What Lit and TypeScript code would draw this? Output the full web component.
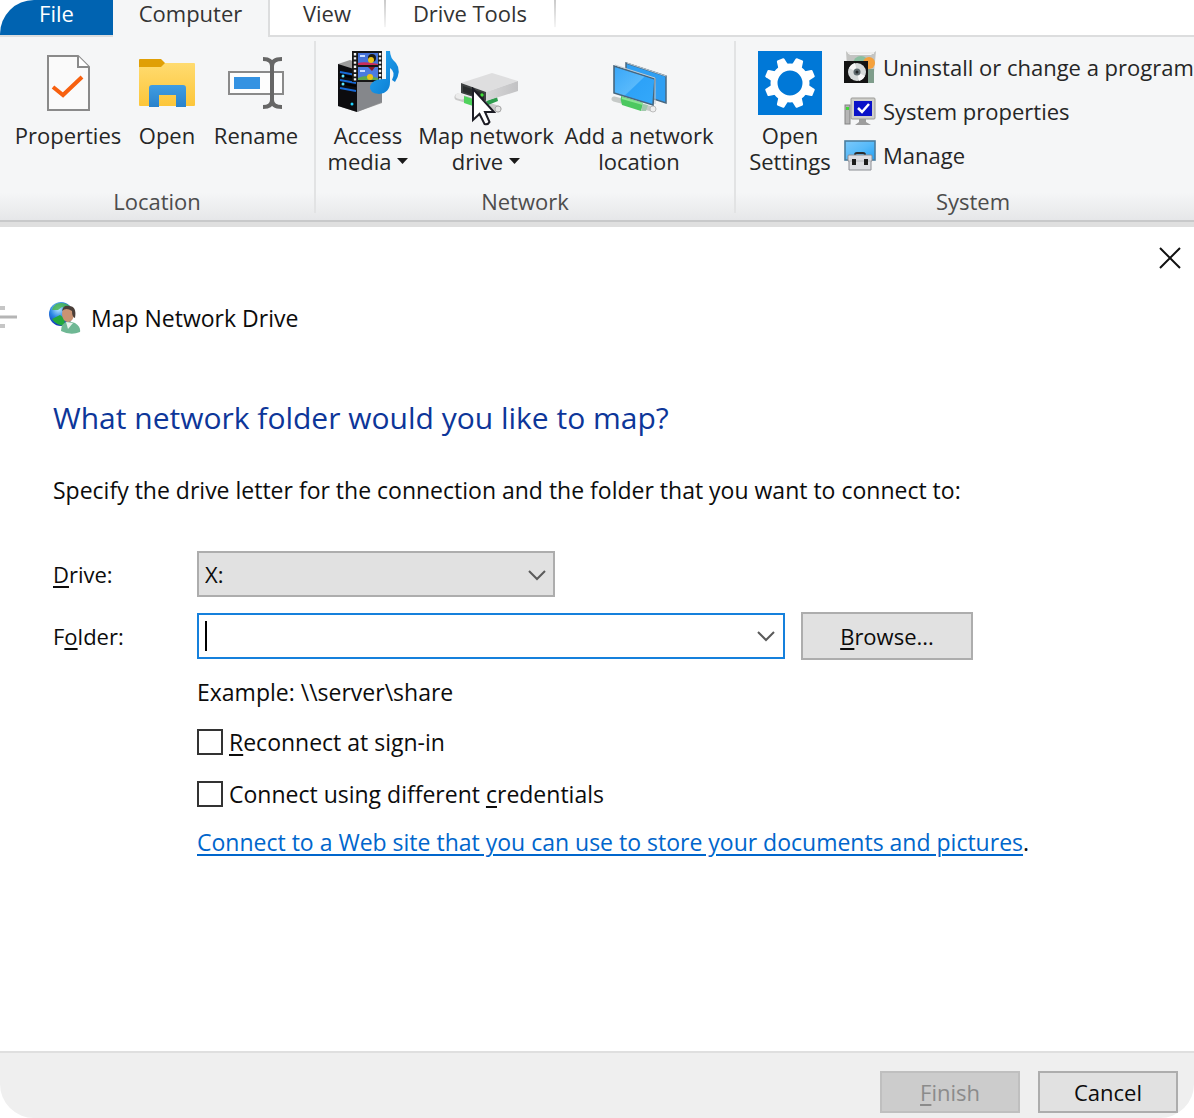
import { LitElement, html, css, svg } from "lit";
import { customElement, property, state } from "lit/decorators.js";

const propertiesIcon = svg`
  <path d="M12 5H42L53 16V59H12Z" fill="#fafafa" stroke="#8a8a8a" stroke-width="2"/>
  <path d="M42 5V16H53" fill="#fff" stroke="#8a8a8a" stroke-width="2"/>
  <path d="M17 36L27 44L46 26" fill="none" stroke="#f7600f" stroke-width="4"/>`;

const openIcon = svg`
  <defs><linearGradient id="fold" x1="0" y1="0" x2="0" y2="1">
    <stop offset="0" stop-color="#ffdb70"/><stop offset="1" stop-color="#fcc63a"/></linearGradient>
    <linearGradient id="clip" x1="0" y1="0" x2="0" y2="1">
    <stop offset="0" stop-color="#3f9de2"/><stop offset="1" stop-color="#2a82cb"/></linearGradient></defs>
  <path d="M5 12H59Q60 12 60 13V54Q60 55 59 55H5Q4 55 4 54V13Z" fill="url(#fold)"/>
  <path d="M4 9Q4 8 5 8H26L30 12L26 16H4Z" fill="#e09f06"/>
  <path d="M14 56V37Q14 34 17 34H48Q51 34 51 37V56H41V44H24V56Z" fill="url(#clip)"/>`;

const renameIcon = svg`
  <rect x="5" y="21" width="54" height="22" fill="#fdfdfd" stroke="#8a8a8a" stroke-width="2"/>
  <rect x="10" y="26" width="26" height="12" fill="#3492e2"/>
  <path d="M39 8Q48 8 48 15Q48 8 58 8M48 13V51M39 56Q48 56 48 49Q48 56 58 56" fill="none" stroke="#666" stroke-width="4"/>`;

const mediaIcon = svg`
  <defs><linearGradient id="note" x1="0" y1="0" x2="1" y2="1">
    <stop offset="0" stop-color="#26aaf5"/><stop offset="1" stop-color="#0878cf"/></linearGradient></defs>
  <path d="M2 13L14 9L46 20V52L21 61L2 55Z" fill="#9b9b9b"/>
  <path d="M21 22L46 22V51L21 61Z" fill="#85878b"/>
  <path d="M2 13L21 19V61L2 55Z" fill="#0c0c0f"/>
  <path d="M4 21L20 24M4 29L20 32M4 37L20 40" stroke="#1769d6" stroke-width="2"/>
  <path d="M4 24L20 27M4 32L20 35" stroke="#000" stroke-width="2"/>
  <circle cx="7" cy="25" r="1.5" fill="#5ce6ff"/><circle cx="7" cy="33" r="1.5" fill="#5ce6ff"/><circle cx="16" cy="53" r="1.5" fill="#1fd3ff"/>
  <rect x="16" y="0" width="30" height="31" fill="#171717"/>
  <path d="M19 2V30M44 2V30" stroke="#f4f4f4" stroke-width="2.4" stroke-dasharray="2.4 1.8"/>
  <rect x="22" y="2" width="20" height="12" fill="#4572d8"/>
  <rect x="22" y="16" width="20" height="13" fill="#4a7be0"/>
  <path d="M22 12Q28 10 42 13V14H22Z" fill="#c92d5b"/>
  <path d="M22 27Q30 23 42 27V29H22Z" fill="#5ea84f"/>
  <path d="M24 5H29M24 20H29" stroke="#c8dcff" stroke-width="2"/>
  <circle cx="36" cy="7" r="4" fill="#1c1c16"/><circle cx="35" cy="9" r="3" fill="#ebc318"/>
  <path d="M32 16L39 16L36 20Z" fill="#8c1727"/><circle cx="34" cy="26" r="3" fill="#ebc318"/>
  <path d="M50 0H54Q54 7 60 12Q66 20 59 31L56 29Q60 21 54 17V31Q54 42 43 43Q33 42 34 35Q37 27 50 28Z" fill="url(#note)"/>`;

const driveIcon = svg`
  <defs><linearGradient id="drv" x1="0" y1="0" x2="1" y2="0">
    <stop offset="0" stop-color="#d7d7d8"/><stop offset="1" stop-color="#c2c2c4"/></linearGradient></defs>
  <path d="M4 46L44 58" stroke="#c9c9c9" stroke-width="7" stroke-linecap="round"/>
  <path d="M4 45L8 46" stroke="#ececec" stroke-width="5" stroke-linecap="round"/>
  <path d="M10 45L19 48V55L10 52Z" fill="#4fd25c"/>
  <path d="M32 50L43 46L44 50L34 54Z" fill="#2e9d4e"/>
  <circle cx="44" cy="58" r="3" fill="#e4e4e4" stroke="#aaa"/>
  <path d="M7 32L38 22L64 30L32 41Z" fill="#dededf"/>
  <path d="M32 41L64 30V40L32 50Z" fill="url(#drv)"/>
  <path d="M7 32L32 41V50L7 42Z" fill="#3f4243"/>
  <path d="M9 35L30 42V48L9 41Z" fill="#292c2d"/>
  <circle cx="28" cy="44" r="1.7" fill="#41e236"/>`;

const locationIcon = svg`
  <defs><linearGradient id="scr" x1="0" y1="0" x2="1" y2="1">
    <stop offset="0" stop-color="#38a6f8"/><stop offset=".5" stop-color="#58b9fb"/><stop offset=".52" stop-color="#2da2f8"/><stop offset="1" stop-color="#35a9fa"/></linearGradient></defs>
  <path d="M19 12L59 25V52L19 39Z" fill="#2f9ff3" stroke="#4a6880" stroke-width="1.5"/>
  <path d="M20 12L59 25" stroke="#b8c4cc" stroke-width="1"/>
  <path d="M7 48L45 58" stroke="#c6cac8" stroke-width="5" stroke-linecap="round"/>
  <path d="M14 45L36 52L34 60L15 54Q13 49 14 45Z" fill="#4cc860"/>
  <path d="M15 47L36 53" stroke="#8be394" stroke-width="2"/>
  <path d="M36 53L41 54L39 60L34 60Z" fill="#a3c9ae"/>
  <circle cx="46" cy="58" r="3" fill="#eee" stroke="#bcbcbc"/>
  <path d="M7 15L48 28L46 54L7 42Z" fill="url(#scr)" stroke="#48667d" stroke-width="1.6"/>
  <path d="M8 14L48 27V53" fill="none" stroke="#c1cad0" stroke-width="1"/>`;

const settingsIcon = svg`
  <rect width="64" height="64" fill="#0078d7"/>
  ${[22.5, 67.5, 112.5, 157.5, 202.5, 247.5, 292.5, 337.5].map(
    (a) => svg`<path d="M26.500 16L28 7.500Q28.200 6.500 29 6.500H35Q35.800 6.500 36 7.500L37.500 16Z" fill="#fff" transform="rotate(${a} 32 32)"/>`
  )}
  <circle cx="32" cy="32" r="16" fill="none" stroke="#fff" stroke-width="7"/>`;

const uninstallIcon = svg`
  <path d="M2 0L6 4H27L32 0L29 32H4Z" fill="#c3c4c2"/>
  <path d="M4 2H30" stroke="#ededec" stroke-width="2"/>
  <circle cx="17" cy="13" r="8" fill="#8bbfa0"/>
  <circle cx="25" cy="12" r="6" fill="#f5a13c"/>
  <path d="M22 18H30V32H22Z" fill="#7f9d8b"/>
  <rect x="0" y="10" width="24" height="22" fill="#131313"/>
  <circle cx="13" cy="21" r="9" fill="#d6dada"/>
  <path d="M13 21L5 17Q7 13 11 12ZM13 21L21 25Q19 29 15 30Z" fill="#f7f7f7"/>
  <circle cx="13" cy="21" r="3.500" fill="#5e6a6e"/><circle cx="13" cy="21" r="1.500" fill="#202426"/>`;

const systemIcon = svg`
  <rect x="1" y="10" width="5" height="19" fill="#b5b5b5" stroke="#838383"/>
  <rect x="2" y="12" width="3" height="3" fill="#43d63a"/>
  <path d="M15 24H22V27L27 30H11L15 27Z" fill="#9d9d9d"/>
  <rect x="7" y="3" width="24" height="21" rx="1" fill="#cfcfca" stroke="#9b9b97"/>
  <rect x="10" y="6" width="18" height="15" fill="#0a12c8"/>
  <path d="M14 13L18 17L25 9" fill="none" stroke="#fff" stroke-width="2.500"/>`;

const manageIcon = svg`
  <defs><linearGradient id="mng" x1="0" y1="0" x2="1" y2="1">
    <stop offset="0" stop-color="#7cc9fb"/><stop offset=".5" stop-color="#57baf9"/><stop offset="1" stop-color="#22a0f4"/></linearGradient></defs>
  <rect x="1" y="2" width="30" height="19" fill="url(#mng)" stroke="#4a7d9f" stroke-width="1.600"/>
  <path d="M11 16Q11 14 13 14H19Q21 14 21 16" fill="none" stroke="#2b2b2b" stroke-width="2"/>
  <path d="M4 17Q4 16 5 16H27Q28 16 28 17V22H27V31H5V22H4Z" fill="#dcdde2" stroke="#8c8e94"/>
  <path d="M5 22H27" stroke="#b4b6bc"/>
  <rect x="8" y="20" width="4" height="6" fill="#1b1b1b"/><rect x="20" y="20" width="4" height="6" fill="#1b1b1b"/>`;

const wizardIcon = svg`
  <defs><radialGradient id="globe" cx=".4" cy=".3" r=".7">
    <stop offset="0" stop-color="#b5e6ff"/><stop offset=".5" stop-color="#2b86e4"/><stop offset="1" stop-color="#0d2fb4"/></radialGradient></defs>
  <circle cx="12" cy="12" r="12" fill="url(#globe)"/>
  <path d="M7 2Q15 -1 21 4L18 7L13 5L9 8L3 8Q4 4 7 2Z" fill="#49b648" opacity=".8"/>
  <path d="M5 16L11 13L16 17L15 24Q7 23 3 17Z" fill="#23a83c"/>
  <path d="M12 29Q12 21 19 19L26 21Q32 25 31 30Q22 34 12 29Z" fill="#6fb894"/>
  <path d="M17 20L19 27L24 21Z" fill="#e9f2ec"/>
  <ellipse cx="19" cy="12" rx="6" ry="8" fill="#c99372"/>
  <path d="M13 9Q14 3 20 4Q28 4 26 16Q23 15 23 9Q17 5 13 9Z" fill="#4a3e38"/>`;

const chevron = html`<svg class="chevron" viewBox="0 0 18 12" width="18" height="12" aria-hidden="true">
  <path d="M1 2L9 10L17 2" fill="none" stroke="#5a5a5a" stroke-width="2"/></svg>`;

@customElement("ribbon-button")
class RibbonButton extends LitElement {
  @property({ attribute: false }) icon: unknown;
  @property() label = "";
  @property() second = "";
  @property({ type: Boolean }) menu = false;

  static styles = css`
    :host { display: block; flex: none; }
    button {
      display: flex; flex-direction: column; align-items: center;
      width: 100%; padding: 0; border: 0; background: none;
      font: inherit; line-height: 26px; color: #262626; white-space: nowrap;
    }
    svg.art { display: block; width: 64px; height: 64px; margin-bottom: 7px; overflow: visible; }
    .line { display: flex; align-items: center; gap: 6px; }
  `;

  render() {
    return html`<button type="button">
      <svg class="art" viewBox="0 0 64 64" aria-hidden="true">${this.icon}</svg>
      <span class="line">${this.label}</span>
      ${this.second
        ? html`<span class="line">${this.second}${this.menu
            ? html`<svg width="11" height="6" viewBox="0 0 11 6" aria-hidden="true"><path d="M0 0H11L5.500 6Z" fill="#1a1a1a"/></svg>`
            : ""}</span>`
        : ""}
    </button>`;
  }
}

@customElement("app-root")
class AppRoot extends LitElement {
  @state() private folder = "";

  static styles = css`
    :host { display: block; background: #fff; font-family: "Open Sans", "Noto Sans", sans-serif; font-size: 22px; color: #0c0c0c; }
    * { box-sizing: border-box; }
    button, input, select { font: inherit; color: inherit; border-radius: 0; }
    svg { display: block; flex: none; }
    .screen { display: flex; flex-direction: column; min-height: 100vh; overflow: hidden; border-radius: 34px; background: #fff; }

    .tabs { display: flex; height: 37px; border-bottom: 2px solid #dcddde; }
    .tab {
      height: 35px; padding: 0 0 9px; border: 0; border-right: 2px solid transparent;
      background: none; line-height: 26px; color: #333; white-space: nowrap;
    }
    .file { width: 113px; background: #0063b1; color: #fff; border: 0; }
    .active { width: 157px; height: 37px; padding-bottom: 11px; background: #f5f6f7; border-right-color: #dcddde; }
    .view { width: 116px; }
    .tools { width: 170px; }
    .view, .tools { border-image: linear-gradient(#c8c8c8, #f4f4f4 26px, transparent 27px) 1; border-width: 0 2px 0 0; border-style: solid; }

    .ribbon { display: flex; height: 185px; padding: 4px 0 7px; border-bottom: 2px solid #c8c9ca; background: linear-gradient(#f5f6f7 85%, #e6e7e9); }
    .group { display: flex; flex-direction: column; justify-content: space-between; flex: none; border-right: 2px solid #e2e3e4; }
    .items { display: flex; padding-top: 10px; }
    .caption { line-height: 24px; text-align: center; color: #4c4c4c; }
    .location { width: 316px; }
    .location .items { gap: 17px; padding-left: 16px; }
    .network { width: 420px; }
    .network .items { gap: 7px; padding-left: 10px; }
    .system { width: 474px; border: 0; }
    .system .items { gap: 12px; padding-left: 12px; padding-top: 4px; }
    .system ribbon-button { padding-top: 6px; }
    .w80 { width: 84px; } .w60 { width: 60px; } .w104 { width: 104px; } .w136 { width: 138px; } .w150 { width: 154px; }
    .pointer-host { position: relative; }
    .pointer { position: absolute; left: 54px; top: 36px; }
    .tasks { margin: 0; padding: 0; list-style: none; }
    .task { display: flex; align-items: center; gap: 7px; height: 44px; padding: 0; border: 0; background: none; color: #262626; white-space: nowrap; }

    .dialog { display: flex; flex-direction: column; flex: 1; border-top: 5px solid #dfdfdf; font-size: 23px; }
    .top { display: flex; justify-content: flex-end; height: 61px; padding: 17px 10px 0 0; }
    .close { width: 28px; height: 28px; padding: 0; border: 0; background: none; display: grid; place-items: center; }
    .titlebar { display: flex; align-items: center; height: 60px; gap: 32px; }
    .back { width: 17px; padding: 0; border: 0; background: none; }
    .name { display: flex; align-items: center; gap: 10px; }
    .body { flex: 1; padding: 46px 53px 24px; }
    h1 { margin: 0 0 32px; font-size: 30px; font-weight: 400; line-height: 48px; color: #0d3699; }
    p { margin: 0; line-height: 32px; }
    .form { display: grid; grid-template-columns: 144px minmax(0, 1fr); align-items: center; margin-top: 45px; row-gap: 15px; }
    .form > label, .push, .picker select { font-size: 22px; }
    .picker { position: relative; width: 358px; max-width: 100%; }
    .picker select { display: block; width: 100%; height: 46px; padding: 0 6px; border: 2px solid #adadad; background: #e1e1e1; appearance: none; }
    .picker .chevron { position: absolute; right: 9px; top: 18px; pointer-events: none; }
    .row { display: flex; align-items: center; gap: 16px; }
    .combo { display: flex; align-items: center; width: 588px; height: 46px; padding-left: 6px; border: 2px solid #1580dc; background: #fff; }
    .caret { width: 2px; height: 30px; background: #000; }
    .combo input { flex: 1; min-width: 0; height: 100%; padding: 0 4px; border: 0; outline: 0; background: none; }
    .drop { padding: 0 8px; border: 0; background: none; }
    .push { border: 2px solid #adadad; background: #e1e1e1; }
    .browse { width: 172px; height: 48px; }
    .extra { grid-column: 2; display: flex; flex-direction: column; align-items: flex-start; margin-top: 1px; }
    .check { display: flex; align-items: center; gap: 6px; height: 32px; margin-top: 20px; }
    .check.first { margin-top: 18px; }
    .check input { appearance: none; width: 26px; height: 26px; margin: 0; border: 2px solid #333; background: #fff; }
    .check input:checked { background: #1580dc; }
    .web { margin-top: 16px; }
    a { color: #0066cc; text-decoration: underline; text-decoration-thickness: 2px; text-underline-offset: 3px; }
    u { text-decoration-thickness: 2px; text-underline-offset: 3px; }
    footer { display: flex; justify-content: flex-end; gap: 18px; padding: 18px 16px 5px; border-top: 2px solid #dfdfdf; background: #efefef; }
    footer .push { width: 140px; height: 42px; padding: 0; }
    .push:disabled { border-color: #bfbfbf; background: #ccc; color: #8b8b8b; }
  `;

  private onFolder(e: Event) {
    this.folder = (e.target as HTMLInputElement).value;
  }

  private task(icon: unknown, label: string) {
    return html`<li><button class="task" type="button">
      <svg width="32" height="32" viewBox="0 0 32 32" aria-hidden="true">${icon}</svg>${label}</button></li>`;
  }

  render() {
    return html`<div class="screen">
      <nav class="tabs">
        <button class="tab file" type="button">File</button>
        <button class="tab active" type="button">Computer</button>
        <button class="tab view" type="button">View</button>
        <button class="tab tools" type="button">Drive Tools</button>
      </nav>
      <section class="ribbon">
        <div class="group location">
          <div class="items">
            <ribbon-button class="w104" .icon=${propertiesIcon} label="Properties"></ribbon-button>
            <ribbon-button class="w60" .icon=${openIcon} label="Open"></ribbon-button>
            <ribbon-button class="w80" .icon=${renameIcon} label="Rename"></ribbon-button>
          </div>
          <div class="caption">Location</div>
        </div>
        <div class="group network">
          <div class="items">
            <ribbon-button class="w80" .icon=${mediaIcon} label="Access" second="media" menu></ribbon-button>
            <div class="pointer-host">
              <ribbon-button class="w136" .icon=${driveIcon} label="Map network" second="drive" menu></ribbon-button>
              <svg class="pointer" width="26" height="40" viewBox="0 0 26 40" aria-hidden="true">
                <path d="M2 2V33L8.500 27L13.500 37Q17 38 18.500 35L14 25H23Z" fill="#fff" stroke="#1c1c24" stroke-width="2"/>
              </svg>
            </div>
            <ribbon-button class="w150" .icon=${locationIcon} label="Add a network" second="location"></ribbon-button>
          </div>
          <div class="caption">Network</div>
        </div>
        <div class="group system">
          <div class="items">
            <ribbon-button class="w80" .icon=${settingsIcon} label="Open" second="Settings"></ribbon-button>
            <ul class="tasks">
              ${this.task(uninstallIcon, "Uninstall or change a program")}
              ${this.task(systemIcon, "System properties")}
              ${this.task(manageIcon, "Manage")}
            </ul>
          </div>
          <div class="caption">System</div>
        </div>
      </section>
      <main class="dialog">
        <div class="top">
          <button class="close" type="button" aria-label="Close">
            <svg width="22" height="22" viewBox="0 0 22 22"><path d="M1 1L21 21M21 1L1 21" stroke="#111" stroke-width="2"/></svg>
          </button>
        </div>
        <div class="titlebar">
          <button class="back" type="button" aria-label="Back">
            <svg width="17" height="24" viewBox="0 0 17 24"><path d="M0 11H17" stroke="#b5b5b5" stroke-width="3"/><path d="M0 2H5M0 20H5" stroke="#c6c6c6" stroke-width="4"/></svg>
          </button>
          <div class="name">
            <svg width="32" height="32" viewBox="0 0 32 32" aria-hidden="true">${wizardIcon}</svg>
            <span>Map Network Drive</span>
          </div>
        </div>
        <div class="body">
          <h1>What network folder would you like to map?</h1>
          <p>Specify the drive letter for the connection and the folder that you want to connect to:</p>
          <div class="form">
            <label for="drive"><u>D</u>rive:</label>
            <div class="picker">
              <select id="drive"><option>X:</option></select>
              ${chevron}
            </div>
            <label for="folder">F<u>o</u>lder:</label>
            <div class="row">
              <div class="combo">
                <span class="caret"></span>
                <input id="folder" type="text" .value=${this.folder} @input=${this.onFolder} />
                <button class="drop" type="button" aria-label="Recent folders">${chevron}</button>
              </div>
              <button class="push browse" type="button"><u>B</u>rowse...</button>
            </div>
            <div class="extra">
              <p>Example: \\\\server\\share</p>
              <label class="check first"><input type="checkbox" /><span><u>R</u>econnect at sign-in</span></label>
              <label class="check"><input type="checkbox" /><span>Connect using different <u>c</u>redentials</span></label>
              <p class="web"><a href="#">Connect to a Web site that you can use to store your documents and pictures</a>.</p>
            </div>
          </div>
        </div>
        <footer>
          <button class="push" type="button" disabled><u>F</u>inish</button>
          <button class="push" type="button">Cancel</button>
        </footer>
      </main>
    </div>`;
  }
}
